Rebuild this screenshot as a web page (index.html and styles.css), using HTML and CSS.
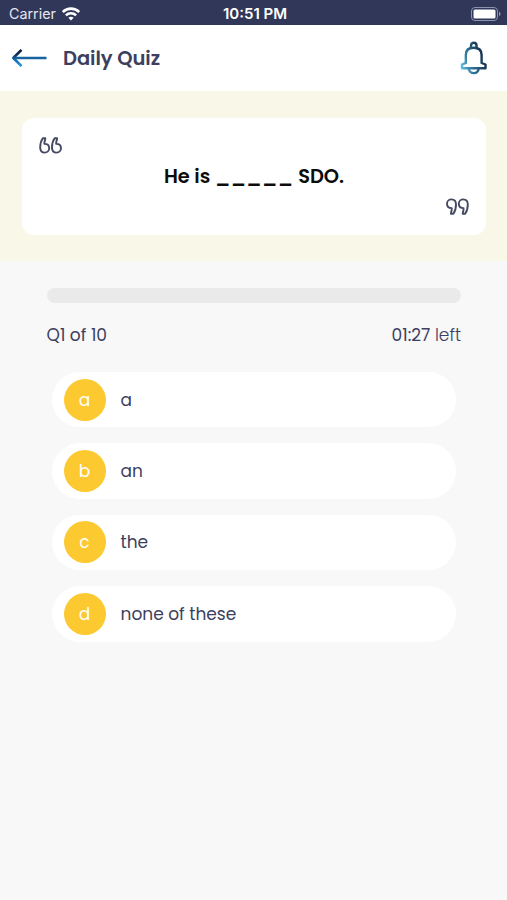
FILE: index.html
```html
<!DOCTYPE html>
<html lang="en">
<head>
    <meta charset="UTF-8">
    <meta name="viewport" content="width=device-width, initial-scale=1.0">
    <title>Daily Quiz</title>
    <link rel="stylesheet" href="styles.css">
</head>
<body>
    <!-- Status bar -->
    <div class="status-bar">
        <div class="carrier">
            <span class="carrier-name">Carrier</span>
            <svg class="wifi" width="18" height="14" viewBox="0 0 18 14" fill="none" stroke="#fff" stroke-width="2.6">
                <path d="M.8 5C5.3.5 12.7.5 17.200 5"/>
                <path d="M3.900 8.300C6.700 5.500 11.300 5.500 14.100 8.300"/>
                <path d="M9 13.500L6.400 10.800C7.800 9.500 10.200 9.500 11.600 10.800Z" fill="#fff" stroke="none"/>
            </svg>
        </div>
        <span class="clock">10:51 PM</span>
        <svg class="battery" width="30" height="14" viewBox="0 0 30 14">
            <rect x=".5" y=".5" width="26" height="13" rx="3.500" fill="none" stroke="#8e93ad"/>
            <rect x="2.500" y="2.500" width="22" height="9" rx="1.500" fill="#fff"/>
            <path d="M28 4.800C30 5.500 30 8.500 28 9.200Z" fill="#8e93ad"/>
        </svg>
    </div>

    <!-- Header -->
    <header class="header">
        <svg class="back" width="36" height="20" viewBox="0 0 36 20" fill="none" stroke-width="2.600" stroke-linejoin="round">
            <defs>
                <linearGradient id="arrowColor" x1="0" y1="0" x2="0" y2="1">
                    <stop offset="0" stop-color="#0a1838"/>
                    <stop offset=".3" stop-color="#0b2c58"/>
                    <stop offset=".55" stop-color="#1263a8"/>
                    <stop offset="1" stop-color="#2196e3"/>
                </linearGradient>
            </defs>
            <path d="M2.500 10H35.500" stroke="#17639f"/>
            <path d="M10.500 1.800L2.300 10L10.500 18.200" stroke="url(#arrowColor)"/>
        </svg>
        <h1 class="title">Daily Quiz</h1>
        <svg class="bell" width="28" height="34" viewBox="0 0 28 34" fill="none" stroke="url(#bellColor)" stroke-width="2.400" stroke-linejoin="round">
            <defs>
                <linearGradient id="bellColor" gradientUnits="userSpaceOnUse" x1="1" y1="28" x2="26" y2="19">
                    <stop offset="0" stop-color="#63c5e8"/>
                    <stop offset=".4" stop-color="#2e7598"/>
                    <stop offset="1" stop-color="#122b48"/>
                </linearGradient>
            </defs>
            <path d="M11 6.500V4.500C11 .8 16.500 .8 16.500 4.500V6.500"/>
            <path d="M5.800 22V14C5.800 9.300 9 6.800 13.700 6.800S21.600 9.300 21.600 14V22L25.500 23.500V27.200H2V23.500Z"/>
            <path d="M8.800 28C10 33.500 17.500 33.500 18.700 28"/>
        </svg>
    </header>

    <!-- Question -->
    <section class="question-area">
        <div class="question-card">
            <svg class="quote" width="23" height="17" viewBox="0 0 23 17" fill="none" stroke="#454961" stroke-width="1.900" stroke-linejoin="round">
                <path d="M6.300 1.200H3.800C1.800 4 1.200 7 1.200 10.500C1.200 13.900 3 15.600 5.700 15.600C8.200 15.600 10.200 13.900 10.200 11.200C10.200 8.700 8.300 6.900 5.500 6.900C4.900 5 6.300 3.500 6.300 1.200Z"/>
                <path d="M18.100 1.200H15.600C13.600 4 13 7 13 10.500C13 13.900 14.800 15.600 17.500 15.600C20 15.600 22 13.900 22 11.200C22 8.700 20.100 6.900 17.300 6.900C16.700 5 18.100 3.500 18.100 1.200Z"/>
            </svg>
            <p class="question">He is <span class="blank">_____</span> SDO.</p>
            <svg class="quote quote-end" width="23" height="17" viewBox="0 0 23 17" fill="none" stroke="#454961" stroke-width="1.900" stroke-linejoin="round">
                <path d="M6.300 1.200H3.800C1.800 4 1.200 7 1.200 10.500C1.200 13.900 3 15.600 5.700 15.600C8.200 15.600 10.200 13.900 10.200 11.200C10.200 8.700 8.300 6.900 5.500 6.900C4.900 5 6.300 3.500 6.300 1.200Z"/>
                <path d="M18.100 1.200H15.600C13.600 4 13 7 13 10.500C13 13.900 14.800 15.600 17.500 15.600C20 15.600 22 13.900 22 11.200C22 8.700 20.100 6.900 17.300 6.900C16.700 5 18.100 3.500 18.100 1.200Z"/>
            </svg>
        </div>
    </section>

    <!-- Progress and answers -->
    <main class="quiz">
        <div class="progress"></div>
        <div class="info">
            <span class="count">Q1 of 10</span>
            <span class="timer">01:27 <span class="left">left</span></span>
        </div>
        <div class="options">
            <div class="option"><span class="letter">a</span><span class="answer">a</span></div>
            <div class="option"><span class="letter">b</span><span class="answer">an</span></div>
            <div class="option"><span class="letter">c</span><span class="answer">the</span></div>
            <div class="option"><span class="letter">d</span><span class="answer">none of these</span></div>
        </div>
    </main>
</body>
</html>
```
FILE: styles.css
```css
* {
    box-sizing: border-box;
}

body {
    margin: 0;
    min-height: 100vh;
    background-color: #f8f8f8;
    color: #3d3f60;
    font-family: Poppins, Inter, "Open Sans", sans-serif;
}

svg {
    display: block;
}

/* Status bar */
.status-bar {
    display: grid;
    grid-template-columns: 1fr auto 1fr;
    align-items: center;
    height: 25px;
    padding: 2px 6px 0 9px;
    background-color: #313759;
    color: #fff;
    font-family: Inter, sans-serif;
    font-size: 14.3px;
}

.carrier {
    display: flex;
    align-items: center;
    gap: 6px;
    color: #e4e6f0;
}

.clock {
    font-size: 15px;
    font-weight: 600;
}

.battery {
    justify-self: end;
}

/* Header */
.header {
    display: flex;
    align-items: center;
    height: 66px;
    padding: 0 19px 0 11px;
    background-color: #fff;
}

.title {
    margin: 0 auto 0 16px;
    font-size: 19.5px;
    font-weight: 600;
    letter-spacing: -0.05px;
}

/* Question */
.question-area {
    height: 170px;
    padding: 27px 21px 27px 22px;
    background-color: #f9f7e8;
}

.question-card {
    display: flex;
    flex-direction: column;
    height: 117px;
    padding: 19px 17px;
    border-radius: 12px;
    background-color: #fff;
}

.question {
    margin: 11px 0 9px;
    color: #0c0c0c;
    font-size: 19.4px;
    font-weight: 600;
    line-height: 24px;
    text-align: center;
    white-space: nowrap;
}

.blank {
    letter-spacing: 0.4px;
}

.quote-end {
    align-self: flex-end;
    transform: rotate(180deg);
}

/* Progress */
.quiz {
    padding: 27px 46px 0 46.5px;
}

.progress {
    height: 15px;
    border-radius: 8px;
    background-color: #eaeaea;
}

.info {
    display: flex;
    justify-content: space-between;
    margin-top: 20px;
    font-size: 17px;
    line-height: 24px;
}

.left {
    font-weight: 300;
}

/* Answers */
.options {
    display: flex;
    flex-direction: column;
    gap: 16px;
    padding: 25px 5px 0;
}

.option {
    display: flex;
    align-items: center;
    gap: 15px;
    height: 55.4px;
    padding-left: 12px;
    border-radius: 28px;
    background-color: #fff;
    font-size: 17px;
}

.letter {
    display: flex;
    align-items: center;
    justify-content: center;
    width: 42px;
    height: 42px;
    border-radius: 50%;
    background-color: #fcc930;
    color: #fff;
}
```
